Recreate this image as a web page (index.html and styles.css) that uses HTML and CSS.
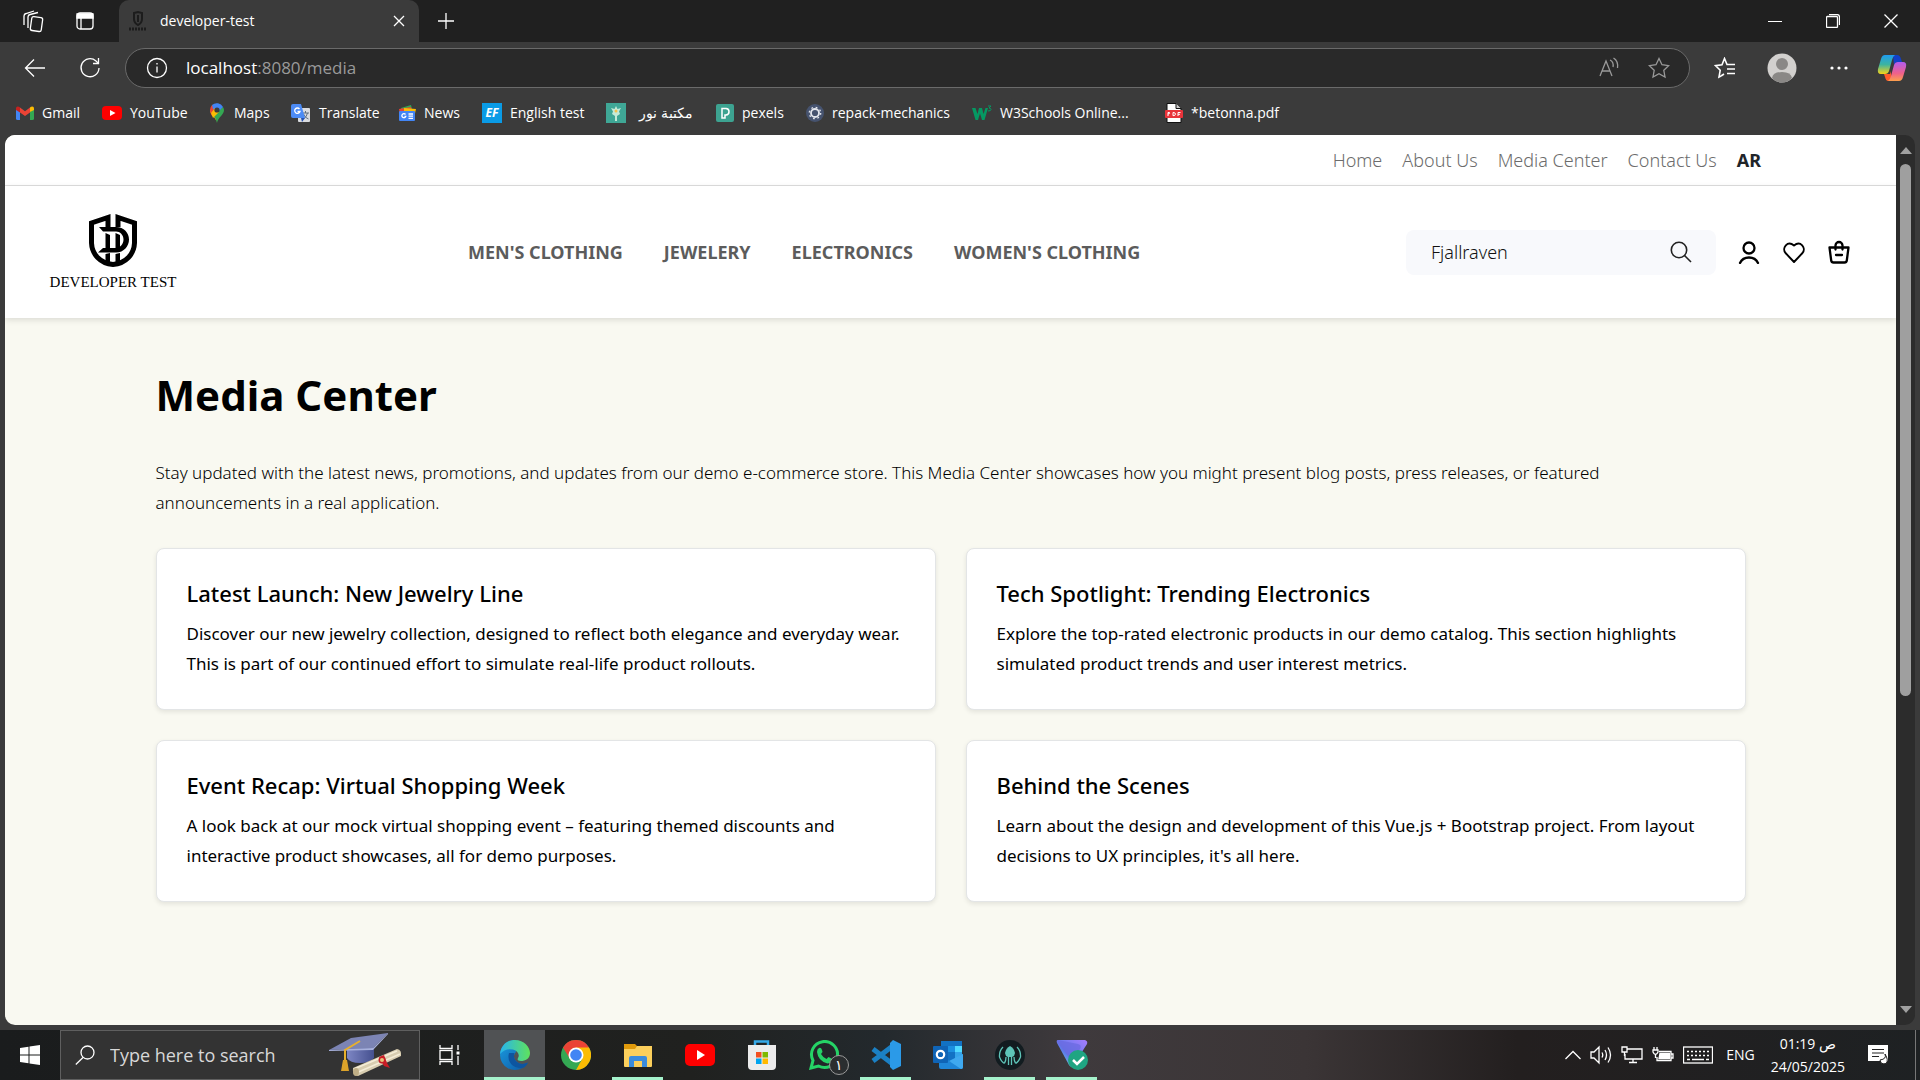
FILE: index.html
```html
<!DOCTYPE html>
<html lang="en">
<head>
<meta charset="utf-8">
<meta name="viewport" content="width=device-width, initial-scale=1">
<title>developer-test</title>
<link rel="stylesheet" href="styles.css">
</head>
<body>
<div class="browser">
  <div class="tabstrip">
    <button class="strip-btn" aria-label="Workspaces"><svg width="24" height="24" viewBox="0 0 24 24" class="line"><rect x="10" y="8" width="11" height="14" rx="2" transform="rotate(8 15 15)"/><path d="M7 19V8q0-2 2-2.500l8-2"/><path d="M3 16V7q0-2 2-2.500l8-2.500"/></svg></button>
    <button class="strip-btn" aria-label="Tab actions"><svg width="20" height="20" viewBox="0 0 20 20" class="line"><rect x="2" y="2" width="16" height="16" rx="3"/><path d="M2 3h16v4H2z" fill="#fff"/><path d="M6 7v11"/></svg></button>
    <div class="tab">
      <svg width="20" height="22" viewBox="0 0 20 22" fill="none" stroke="#1c1c1c" stroke-width="2"><path d="M6 3l4-1 4 1v6q0 4-4 6-4-2-4-6z"/><path d="M10 5v7"/><path d="M1 19h18" stroke-width="3" stroke-dasharray="2 1"/></svg>
      <span class="tab-title">developer-test</span>
      <button class="tab-close" aria-label="Close tab"><svg width="12" height="12" viewBox="0 0 12 12" class="line"><path d="M1 1l10 10M11 1L1 11"/></svg></button>
    </div>
    <button class="new-tab" aria-label="New tab"><svg width="18" height="18" viewBox="0 0 18 18" class="line"><path d="M9 1v16M1 9h16"/></svg></button>
    <div class="window-controls">
      <button aria-label="Minimize"><svg width="14" height="14" viewBox="0 0 14 14" class="line"><path d="M0 7.500h14" stroke-width="1"/></svg></button>
      <button aria-label="Restore"><svg width="14" height="14" viewBox="0 0 14 14" class="line"><rect x=".5" y="2.500" width="11" height="11" rx="1"/><path d="M3 .6h8q2.500 0 2.500 2.500v8"/></svg></button>
      <button aria-label="Close"><svg width="14" height="14" viewBox="0 0 14 14" class="line"><path d="M.5.5l13 13M13.500.5l-13 13"/></svg></button>
    </div>
  </div>

  <div class="toolbar">
    <button class="tool-btn back" aria-label="Back"><svg width="22" height="20" viewBox="0 0 22 20" class="line"><path d="M21 10H1.500M10 1.500L1.500 10l8.500 8.500"/></svg></button>
    <button class="tool-btn" aria-label="Refresh"><svg width="22" height="22" viewBox="0 0 22 22" class="line"><path d="M20 11a9 9 0 1 1-3-7l2 2"/><path d="M19.500 1v5.500H14"/></svg></button>
    <div class="address">
      <svg width="22" height="22" viewBox="0 0 22 22" class="line"><circle cx="11" cy="11" r="9.500"/><path d="M11 9.500v6M11 6v1.600"/></svg>
      <span class="url"><b>localhost</b>:8080/media</span>
      <svg width="22" height="22" viewBox="0 0 22 22" class="line dim"><path d="M2 19L8 4l6 15M4 14h8"/><path d="M12 3q4 2 3 7M15.500 1q5 3 4 10"/></svg>
      <svg width="22" height="22" viewBox="0 0 22 22" class="line dim"><path d="M11 1.500l3 6.200 6.600.9-4.800 4.700 1.200 6.700-6-3.200-6 3.200 1.200-6.700L1.400 8.600 8 7.700z"/></svg>
    </div>
    <button class="tool-btn fav" aria-label="Favorites"><svg width="22" height="22" viewBox="0 0 22 22" class="line bold"><path d="M7 19l-2 1 1.200-6.700L1.400 8.600 8 7.700 10.500 1.500 13 7.500h8M13 12h8M13 16.500h8"/><path d="M7 19l3-2"/></svg></button>
    <button class="tool-btn profile" aria-label="Profile"><svg width="30" height="30" viewBox="0 0 30 30"><circle cx="15" cy="15" r="14.500" fill="#d2d0ce"/><circle cx="15" cy="11" r="6" fill="#8a8886"/><path d="M5 25q1-6 10-6t10 6q-4 4.500-10 4.500T5 25z" fill="#8a8886"/></svg></button>
    <button class="tool-btn more" aria-label="Settings and more"><svg width="18" height="4" viewBox="0 0 18 4" fill="#fff"><circle cx="2" cy="2" r="1.600"/><circle cx="9" cy="2" r="1.600"/><circle cx="16" cy="2" r="1.600"/></svg></button>
    <button class="tool-btn copilot" aria-label="Copilot"><svg width="30" height="28" viewBox="0 0 30 28"><defs><linearGradient id="cpA" x2="0" y2="1"><stop offset="0" stop-color="#1f9cf0"/><stop offset=".5" stop-color="#3cb4a0"/><stop offset="1" stop-color="#f6d318"/></linearGradient><linearGradient id="cpB" x2="0" y2="1"><stop offset="0" stop-color="#b15cf0"/><stop offset=".6" stop-color="#f0618a"/><stop offset="1" stop-color="#fda04c"/></linearGradient></defs><path d="M16 1h4q3 0 4 4l1 3h-4q-3 0-4 3z" fill="#1240c8"/><path d="M7 20h6l1-3v10h-3q-2 0-3-4z" fill="#ff5a2a"/><path d="M8 1h10q-2 1-3 5l-3 11q-1 3-4 3H4q-4 0-3-5L4 5q1-4 4-4z" fill="url(#cpA)"/><path d="M22 27H11q2-1 3-5l3-11q1-3 4-3h5q4 0 3 5l-3 10q-1 4-4 4z" fill="url(#cpB)"/></svg></button>
  </div>

  <nav class="bookmarks" aria-label="Bookmarks">
    <a href="#"><svg width="18" height="18" viewBox="0 0 18 18"><path d="M0 4v10.500q0 1.500 1.500 1.500H4V8z" fill="#4285f4"/><path d="M18 4v10.500q0 1.500-1.500 1.500H14V8z" fill="#34a853"/><path d="M14 8V3.500l1-.8q3-1 3 1.800V6z" fill="#fbbc04"/><path d="M4 3.500L9 7.200l5-3.700V8.500L9 12 4 8.500z" fill="#ea4335"/><path d="M4 8.500V3.500l-1-.8q-3-1-3 1.800V6z" fill="#c5221f"/></svg>Gmail</a>
    <a href="#"><svg width="20" height="18" viewBox="0 0 20 18"><rect y="2" width="20" height="14" rx="4" fill="#f00"/><path d="M8 6l5.500 3L8 12z" fill="#fff"/></svg>YouTube</a>
    <a href="#"><svg width="18" height="20" viewBox="0 0 18 20"><path d="M9 20C8 14 2 12 2 7l4 2z" fill="#fbbc04"/><path d="M9 20c1-6 7-8 7-13a7 7 0 0 0-1-3L5 12q3 3 4 8z" fill="#34a853"/><path d="M2 7a7 7 0 0 1 2-5l5 5-5 6Q2 10 2 7z" fill="#ea4335"/><path d="M4 2a7 7 0 0 1 11 2l-4 4-6-2z" fill="#4285f4"/><path d="M3 10l4-5 4 4-6 6z" fill="#fbbc04"/><circle cx="9" cy="7" r="2.600" fill="#3b3b3b"/></svg>Maps</a>
    <a href="#"><svg width="20" height="20" viewBox="0 0 20 20"><rect x="7" y="5" width="12" height="14" rx="1" fill="#dadce0"/><path d="M11 10h7M14.500 8v2M12 16q4-2 4.500-6M12.500 11q1.500 4 5 5" stroke="#5f6f80" fill="none"/><path d="M2 1h8l4 14H2q-2 0-2-2V3q0-2 2-2z" fill="#4c8bf5"/><path d="M10 15h4l-3 4z" fill="#2451b0"/><path d="M8.500 6a2.700 2.700 0 1 0 .5 2.500H6.500" stroke="#fff" stroke-width="1.300" fill="none"/></svg>Translate</a>
    <a href="#"><svg width="18" height="18" viewBox="0 0 18 18"><path d="M3 4l10-3 2 8H4z" fill="#34a853"/><path d="M1 5l12-2 1 8H2z" fill="#ea4335"/><path d="M6 4l12 1-2 9H6z" fill="#fbbc04"/><rect x="1" y="7" width="16" height="10" rx="1" fill="#4285f4"/><path d="M7.500 10.500a2 2 0 1 0 .3 1.800H6.500M10.500 10h4.500M10.500 12.200h4.500M10.500 14.400h4.500" stroke="#fff" stroke-width="1.300" fill="none"/></svg>News</a>
    <a href="#"><span class="ef">EF</span>English test</a>
    <a href="#" class="noor"><svg width="20" height="20" viewBox="0 0 20 20"><rect width="20" height="20" fill="#3fa796"/><path d="M10 3l1.500 3L15 5l-2 3.500 1 2.500-3 2v5H9v-5l-3-2 1-2.500L5 5l3.500 1z" fill="#c4ead8"/><circle cx="10" cy="8" r="1.500" fill="#f3c04c"/></svg><span dir="rtl" lang="ar">مكتبة نور</span></a>
    <a href="#"><svg width="18" height="18" viewBox="0 0 18 18"><rect width="18" height="18" rx="2" fill="#3da391"/><path d="M6 4.500h4q3 .2 3 3.200T10 11H9v3H6z" fill="none" stroke="#fff" stroke-width="1.500"/></svg>pexels</a>
    <a href="#"><svg width="18" height="20" viewBox="0 0 18 20"><circle cx="9" cy="10" r="9" fill="#46536f"/><circle cx="9" cy="10" r="4" fill="none" stroke="#e2e5ec" stroke-width="1.800"/><circle cx="9" cy="10" r="5.700" fill="none" stroke="#e2e5ec" stroke-width="1.300" stroke-dasharray="1.800 2.676"/></svg>repack-mechanics</a>
    <a href="#"><svg width="20" height="18" viewBox="0 0 20 18"><path d="M0 4h3.500l2 6 1.500-6h3l1.500 6 2-6H16l-3.500 12H10L8 9.500 6 16H3.500z" fill="#059862"/><path d="M16 2h3l-2 2q2 0 2 1.500T16 7" fill="none" stroke="#059862"/></svg>W3Schools Online...</a>
    <a href="#"><svg width="18" height="20" viewBox="0 0 18 20"><path d="M2 .5h9l5 5v14H2z" fill="#fff" stroke="#111"/><path d="M11 .5v5h5" fill="#ccc" stroke="#111"/><rect y="7" width="18" height="8" rx="1" fill="#e8333a"/><path d="M3 13V9.500h1.500q1 1-1.500 1.500M8 9.500v3.200q2.500 0 2.500-1.600T8 9.500M13 13V9.500h2.500M13 11.300h2" fill="none" stroke="#fff"/></svg>*betonna.pdf</a>
  </nav>

  <div class="frame">
    <div class="page">
      <nav class="topbar" aria-label="Secondary">
        <a href="#">Home</a><a href="#">About Us</a><a href="#">Media Center</a><a href="#">Contact Us</a><a href="#" class="lang">AR</a>
      </nav>
      <header class="header">
        <a href="#" class="logo">
          <svg width="50" height="55" viewBox="0 0 50 55"><g fill="none" stroke="#000" stroke-width="5"><path d="M20 14V4.500L3.500 10v20C4 41 12 50.500 25 51.500 38 50.500 46 41 46.500 30V10L30 4.500V14"/></g><path d="M11 14h17c8 0 13 6 13 12.500S36 39.500 28 39.500H10l5-4.500h13c4 0 7.500-4 7.500-8.500S32 18.500 28 18.500H15z"/><path d="M17.500 20l4.500 2v15h-4.500zM27.500 20l4.500 2v15h-4.500zM17.500 41l4.500-1v9h-4.500zM27.500 41l4.500-1v9h-4.500z"/></svg>
          <span>DEVELOPER TEST</span>
        </a>
        <nav class="categories" aria-label="Categories">
          <a href="#">MEN'S CLOTHING</a><a href="#">JEWELERY</a><a href="#">ELECTRONICS</a><a href="#">WOMEN'S CLOTHING</a>
        </nav>
        <div class="actions">
          <form class="search">
            <input type="text" value="Fjallraven" aria-label="Search products">
            <button type="button" aria-label="Search"><svg width="22" height="22" viewBox="0 0 22 22" fill="none" stroke="#222" stroke-width="1.600"><circle cx="9" cy="9" r="7.700"/><path d="M14.500 14.500L21 21"/></svg></button>
          </form>
          <a href="#" aria-label="Account"><svg width="24" height="24" viewBox="0 0 24 24" class="ink"><circle cx="12" cy="8" r="5.500"/><path d="M3 23q2.500-5.500 9-5.500t9 5.500"/></svg></a>
          <a href="#" aria-label="Wishlist"><svg width="24" height="24" viewBox="0 0 24 24" class="ink"><path d="M12 22L3.500 13C-.5 8 5.500 0 12 5.500c6.500-5.500 12.500 2.500 8.500 7.500z" stroke-width="1.900"/></svg></a>
          <a href="#" aria-label="Cart"><svg width="24" height="24" viewBox="0 0 24 24" class="ink"><path d="M2.500 7.500h19l-1.700 13q-.3 2-2.300 2h-11q-2 0-2.300-2z"/><path d="M8.500 9.500V5.500a3.500 3.500 0 0 1 7 0v4M9 15h6"/></svg></a>
        </div>
      </header>
      <main class="content">
        <h1>Media Center</h1>
        <p class="intro">Stay updated with the latest news, promotions, and updates from our demo e-commerce store. This Media Center showcases how you might present blog posts, press releases, or featured announcements in a real application.</p>
        <div class="cards">
          <article class="card"><h2>Latest Launch: New Jewelry Line</h2><p>Discover our new jewelry collection, designed to reflect both elegance and everyday wear. This is part of our continued effort to simulate real-life product rollouts.</p></article>
          <article class="card"><h2>Tech Spotlight: Trending Electronics</h2><p>Explore the top-rated electronic products in our demo catalog. This section highlights simulated product trends and user interest metrics.</p></article>
          <article class="card"><h2>Event Recap: Virtual Shopping Week</h2><p>A look back at our mock virtual shopping event – featuring themed discounts and interactive product showcases, all for demo purposes.</p></article>
          <article class="card"><h2>Behind the Scenes</h2><p>Learn about the design and development of this Vue.js + Bootstrap project. From layout decisions to UX principles, it's all here.</p></article>
        </div>
      </main>
    </div>
    <div class="scrollbar">
      <svg width="12" height="8" viewBox="0 0 12 8" fill="#a0a0a0"><path d="M6 0l6 7H0z"/></svg>
      <div class="track"><div class="thumb"></div></div>
      <svg width="12" height="8" viewBox="0 0 12 8" fill="#a0a0a0"><path d="M6 8l6-7H0z"/></svg>
    </div>
  </div>
</div>

<footer class="taskbar">
  <button class="start" aria-label="Start"><svg width="20" height="20" viewBox="0 0 20 20" fill="#fff"><path d="M0 3l8.500-1.200v7.700H0zM9.500 1.600L20 0v9.500H9.500zM0 10.500h8.500v7.700L0 17zM9.500 10.500H20V20L9.500 18.400z"/></svg></button>
  <label class="task-search">
    <svg width="20" height="20" viewBox="0 0 20 20" class="line"><circle cx="12.500" cy="7.500" r="6.500"/><path d="M8 12.500L.8 19.500"/></svg>
    <input type="text" placeholder="Type here to search">
    <svg width="74" height="46" viewBox="0 0 74 46"><defs><linearGradient id="cap"><stop offset="0" stop-color="#7d86c4"/><stop offset="1" stop-color="#45508f"/></linearGradient></defs><path d="M18 17l27-3v12q-4 5-14 5t-13-5z" fill="url(#cap)"/><path d="M0 18L22 6 59 1 44 16z" fill="#7c84b4"/><path d="M0 18l44-2L59 1v1L44 18 0 19z" fill="#a8b1dc"/><path d="M31 9L16 18v15" fill="none" stroke="#e8b02c" stroke-width="2"/><path d="M14 28h4l2 11h-8z" fill="#dca32a"/><path d="M24 36L68 17q5 1 4 7L29 44q-6-1-5-8z" fill="#d8cdb0"/><path d="M25 37l43-18M27 41l44-19" stroke="#f4ecd6" stroke-width="1.500"/><path d="M50 25l5 9 6 2-3-5-3-8z" fill="#c81e26"/><circle cx="53" cy="28" r="3.500" fill="#c81e26"/><circle cx="53" cy="28" r="2" fill="#e6c27a"/><ellipse cx="27" cy="40" rx="3" ry="4" fill="#bfae86"/></svg>
  </label>
  <button class="task view" aria-label="Task view"><svg width="22" height="22" viewBox="0 0 22 22" class="line"><path d="M1 1v3.500h12V1M1 21v-3.500h12V21M19 1v5M19 12v9"/><rect x="1" y="6.500" width="12" height="9"/><path d="M19 7.500v3" stroke-width="3"/></svg></button>
  <button class="task active" aria-label="Edge"><svg width="30" height="30" viewBox="0 0 30 30"><defs><linearGradient id="edA" x2="1"><stop offset="0" stop-color="#27b4ee"/><stop offset="1" stop-color="#5fe25c"/></linearGradient><linearGradient id="edB" x2="1" y2="1"><stop offset="0" stop-color="#1b9de2"/><stop offset="1" stop-color="#0c59a4"/></linearGradient></defs><path d="M15 0a15 15 0 1 0 13 22.500q-5 2.500-9.500.5C13 20 13 15 16 12z" fill="url(#edB)"/><path d="M9 13q-2 7 3 12 6 5 12 2.500 3-2 4-5-5 2.500-9.500.5-6-3.500-4-10z" fill="#0d55a0"/><path d="M0 14C1 5 7 0 15 0c9 0 15 7 15 13 0 6-5 8-9 8-3 0-4-1-3-3 2-3 0-7-5-8.500Q5 8 0 14z" fill="url(#edA)"/></svg></button>
  <button class="task" aria-label="Chrome"><svg width="30" height="30" viewBox="0 0 30 30"><circle cx="15" cy="15" r="15" fill="#34a853"/><path d="M15 15L2 7.500A15 15 0 0 1 28 7.500z" fill="#ea4335"/><path d="M15 15V7.500h13A15 15 0 0 1 15 30l6.500-11.500z" fill="#fbbc04"/><path d="M2 7.500L9 19l6-11.500z" fill="#ea4335"/><circle cx="15" cy="15" r="7.500" fill="#fff"/><circle cx="15" cy="15" r="5.800" fill="#4285f4"/></svg></button>
  <button class="task open" aria-label="File Explorer"><svg width="28" height="28" viewBox="0 0 28 28"><path d="M0 3h11l3 3-3 3H0z" fill="#e09a0b"/><path d="M0 8h11l2-3h15v20q0 1-1 1H1q-1 0-1-1z" fill="#fbcf5c"/><path d="M5 26V17q0-2 2-2h14q2 0 2 2v9h-5v-6h-8v6z" fill="#3a8bdc"/></svg></button>
  <button class="task" aria-label="YouTube"><svg width="30" height="22" viewBox="0 0 30 22"><rect width="30" height="22" rx="5" fill="#f00"/><path d="M12 6l8 5-8 5z" fill="#fff"/></svg></button>
  <button class="task" aria-label="Store"><svg width="30" height="30" viewBox="0 0 30 30"><path d="M8 8V1.500h13V8" fill="none" stroke="#35a9e8" stroke-width="2.500"/><path d="M1 5h28v21q0 4-4 4H5q-4 0-4-4z" fill="#ececec"/><path d="M9 12h5.500v5.500H9z" fill="#f25022"/><path d="M15.500 12H21v5.500h-5.500z" fill="#7fba00"/><path d="M9 18.500h5.500V24H9z" fill="#00a4ef"/><path d="M15.500 18.500H21V24h-5.500z" fill="#ffb900"/></svg></button>
  <button class="task" aria-label="WhatsApp"><svg width="30" height="30" viewBox="0 0 30 30"><path d="M2 28l2-7.500A13 13 0 1 1 9.500 26z" fill="none" stroke="#25d366" stroke-width="3"/><path d="M10 8q2-1 3 2l.5 2-1.500 2q2 3.500 5.500 5l2-2 4 2q0 4-5 4.500Q9 21 8 12q0-3 2-4z" fill="#25d366"/></svg><span class="badge">١</span></button>
  <button class="task open" aria-label="VS Code"><svg width="30" height="30" viewBox="0 0 30 30"><path d="M2 9L23 25M2 21L23 5" stroke="#1b80c4" stroke-width="5"/><path d="M22 0l8 4v22l-8 4-3-3V3z" fill="#2b9ae8"/></svg></button>
  <button class="task" aria-label="Outlook"><svg width="30" height="30" viewBox="0 0 30 30"><rect x="8" y="1" width="21" height="20" fill="#1272c4"/><path d="M15 6h7v6h-7z" fill="#1b8fe0"/><path d="M22 6h7v6h-7z" fill="#50d9ff"/><path d="M22 12h7v6h-7z" fill="#35a5ea"/><path d="M6 14l12 8 12-8v13q0 2-2 2H8q-2 0-2-2z" fill="#1f86d8"/><path d="M30 14v13q0 2-2 2L16 21z" fill="#3fa9f0"/><rect y="6" width="15" height="17" rx="1" fill="#0f64b6"/><circle cx="7.500" cy="14.500" r="3.700" fill="none" stroke="#fff" stroke-width="2.200"/></svg></button>
  <button class="task open" aria-label="GitKraken"><svg width="30" height="30" viewBox="0 0 30 30"><circle cx="15" cy="15" r="15" fill="#121c20"/><path d="M15 6q4 2 5 7l-1 3-2 1h-4l-2-1-1-3q1-5 5-7z" fill="#5ec4b8"/><path d="M8 7q-4 4-3.500 10 2 5 5 6.500M22 7q4 4 3.500 10-2 5-5 6.500M13.500 16v9M16.500 16v9M11 17q0 4-1.500 6M19 17q0 4 1.500 6" fill="none" stroke="#5ec4b8" stroke-width="1.300"/></svg></button>
  <button class="task open" aria-label="Proton VPN"><svg width="34" height="32" viewBox="0 0 34 32"><defs><linearGradient id="vpn" x1="1" x2="0" y2="1"><stop offset="0" stop-color="#a67cff"/><stop offset=".6" stop-color="#5e7ce8"/><stop offset="1" stop-color="#7be8d6"/></linearGradient></defs><path d="M3 1h27q3 1 2 4L18 27q-2 2-4-1L2 4Q1 1 3 1z" fill="url(#vpn)"/><path d="M3 1l20 4q4 1 2 5l-8 12L2 3z" fill="#6a68e0" opacity=".7"/><circle cx="23" cy="21" r="10" fill="#1fa582"/><path d="M18 21l4 4 7-7" fill="none" stroke="#fff" stroke-width="2.500"/></svg></button>
  <div class="tray">
    <svg width="16" height="10" viewBox="0 0 16 10" class="line"><path d="M.5 9L8 1.500 15.500 9"/></svg>
    <svg width="22" height="20" viewBox="0 0 22 20" class="line"><path d="M1 7h3l5-5v16l-5-5H1zM12 7.500q1.500 2.500 0 5M15 5q3 5 0 10M18 2.500q5 7.500 0 15"/></svg>
    <svg width="22" height="18" viewBox="0 0 22 18" class="line"><path d="M6 3h15v10H4V8M12 13v3.500M8 16.500h8M1 1h5v5H1zM3.500 6v4"/></svg>
    <svg width="22" height="16" viewBox="0 0 22 16" class="line"><path d="M7 4.500h12v9H5V10M19.500 7H21v4h-1.500M2 0v3M5 0v3M1 3h5v2q-1 2.500-2.500 2.500T1 5zM3.500 8v3"/><path d="M8 6.500h9.500v5H7z" fill="#fff"/></svg>
    <svg width="30" height="18" viewBox="0 0 30 18" class="line"><rect x=".5" y="1" width="29" height="16"/><path d="M4 5.500h22M4 9.500h22" stroke-dasharray="2 2"/><path d="M4 13.500h3M9 13.500h12M23 13.500h3"/></svg>
    <span class="ime">ENG</span>
    <span class="clock"><span dir="rtl">ص 01:19</span><span>24/05/2025</span></span>
    <svg width="22" height="22" viewBox="0 0 22 22"><path d="M0 1h20v16H6l-4 0H0z" fill="#fff"/><path d="M4 5.500h12M4 9h12M4 12.500h7" stroke="#222"/><path d="M17 10q2 5-5 6 1 5 6 3.500 3-3-1-9.500z" fill="#fff" stroke="#222"/></svg>
    <span class="peek"></span>
  </div>
</footer>
</body>
</html>
```
FILE: styles.css
```css
* { box-sizing: border-box; }
body {
  margin: 0;
  min-height: 100vh;
  display: flex;
  flex-direction: column;
  background: #3b3b3b;
  color: #fff;
  font: 14px/20px "Open Sans", "Noto Sans", sans-serif;
}
button {
  border: 0;
  padding: 0;
  background: none;
  color: inherit;
  display: flex;
  align-items: center;
  justify-content: center;
}
a { color: inherit; text-decoration: none; }
svg { flex: none; display: block; }
.line { fill: none; stroke: #fff; stroke-width: 1.3; }
.line.bold { stroke-width: 1.6; }
.line.dim { stroke: #9a9a9a; }

/* Browser chrome */
.browser { flex: 1; display: flex; flex-direction: column; }
.tabstrip { display: flex; align-items: center; height: 42px; padding-left: 7px; background: #202020; }
.strip-btn { width: 52px; height: 42px; }
.tab {
  width: 300px;
  height: 42px;
  margin-left: 8px;
  padding: 0 12px 0 9px;
  display: flex;
  align-items: center;
  gap: 12px;
  background: #3b3b3b;
  border-radius: 10px 10px 0 0;
}
.tab-title { flex: 1; }
.tab-close { width: 16px; height: 24px; }
.new-tab { width: 54px; height: 42px; }
.window-controls { display: flex; margin-left: auto; }
.window-controls button { width: 58px; height: 42px; }

.toolbar { display: flex; align-items: center; height: 52px; padding: 0 11px 0 7px; }
.tool-btn { width: 55px; height: 40px; }
.address {
  flex: 1;
  height: 40px;
  margin-left: 8px;
  padding: 0 19px 0 20px;
  display: flex;
  align-items: center;
  gap: 28px;
  background: #292929;
  border: 1px solid #6a6a6a;
  border-radius: 20px;
}
.url { flex: 1; margin-left: -10px; font-size: 17px; line-height: 24px; color: #9a9a9a; }
.url b { font-weight: 400; color: #fff; }
.fav { width: 70px; }
.profile { width: 44px; }
.more { width: 70px; }
.copilot { width: 35px; }

.bookmarks {
  display: grid;
  grid-template-columns: 86px 106px 83px 107px 84px 124px 110px 90px 166px 193px auto;
  align-items: center;
  height: 36px;
  padding: 1px 0 0 16px;
}
.bookmarks a { display: flex; align-items: center; gap: 8px; white-space: nowrap; }
.bookmarks .noor { gap: 13px; }
.ef { width: 20px; background: #0a9be6; font: italic 700 12px/20px "Open Sans", sans-serif; text-align: center; }

.frame {
  flex: 1;
  display: flex;
  margin: 5px;
  border-radius: 10px;
  overflow: hidden;
}
.scrollbar {
  width: 19px;
  padding: 12px 0;
  display: flex;
  flex-direction: column;
  align-items: center;
  gap: 9px;
  background: #2c2c2c;
}
.track { flex: 1; }
.thumb { width: 11px; height: 64%; min-height: 40px; background: #9f9f9f; border-radius: 6px; }

/* Web page */
.page {
  flex: 1;
  background: #f9f9f1;
  color: #000;
  font: 17px/30px "Noto Sans", sans-serif;
}
.topbar {
  display: flex;
  align-items: center;
  justify-content: flex-end;
  gap: 20px;
  height: 51px;
  padding-right: 135px;
  background: #fff;
  border-bottom: 1px solid #dedede;
  color: #6c6c6c;
  font-size: 18px;
  font-weight: 300;
}
.lang { color: #212529; font-weight: 700; }
.header {
  display: flex;
  align-items: center;
  height: 132px;
  padding: 0 45px;
  background: #fff;
  box-shadow: 0 2px 6px rgba(0, 0, 0, .12);
}
.logo { display: flex; flex-direction: column; align-items: center; gap: 4px; width: 126px; font: 15px/20px "Liberation Serif", serif; white-space: nowrap; }
.categories { display: flex; gap: 41px; margin-left: 292px; font-size: 18px; font-weight: 700; color: #5c5c5c; }
.actions { display: flex; align-items: center; gap: 21px; margin-left: auto; }
.ink { fill: none; stroke: #000; stroke-width: 2.3; stroke-linecap: round; stroke-linejoin: round; }
.search { display: flex; align-items: center; width: 310px; height: 45px; padding: 0 24px 0 25px; background: #f8f9fc; border-radius: 8px; }
.search input { flex: 1; min-width: 0; border: 0; padding: 0; background: none; font: 300 18px/24px "Noto Sans", sans-serif; color: #111; }

.content { max-width: 1590px; margin: 0 auto; padding: 48px 0 30px; }
h1 { margin: 0 0 34px; font-size: 42px; line-height: 58px; font-weight: 700; }
.intro { max-width: 1540px; margin: 0 0 30px; font-weight: 350; }
.cards { display: grid; grid-template-columns: 1fr 1fr; gap: 30px; }
.card { padding: 30px; background: #fff; border: 1px solid #e3e5e6; border-radius: 8px; box-shadow: 0 2px 5px rgba(0, 0, 0, .09); }
.card h2 { margin: 0 0 12px; font-size: 22px; line-height: 28px; font-weight: 500; }
.card p { margin: 0; }

/* Taskbar */
.taskbar {
  display: flex;
  height: 50px;
  background: linear-gradient(90deg, #1a1c1d, #20211f 36%, #23292d 46%, #3f3a3d 56%, #3b3536 68%, #231f1f 79%, #1e2123);
}
.start { width: 60px; }
.task-search { display: flex; align-items: center; width: 360px; padding: 0 16px 0 14px; background: #333; border: 1px solid #5f5f5f; }
.task-search input { flex: 1; min-width: 0; margin-left: 15px; padding: 0; border: 0; background: none; font: 18px/24px "Open Sans", sans-serif; }
.task-search input::placeholder { color: #d8d8d8; opacity: 1; }
.task { position: relative; width: 51px; margin: 0 6px 0 5px; }
.task.view { width: 60px; margin: 0 4px 0 0; }
.task.active { width: 61px; margin: 0; background: #505254; border-bottom: 3px solid #a5f2cc; padding-top: 3px; }
.task.open { border-bottom: 3px solid #a5f2cc; padding-top: 3px; }
.badge {
  position: absolute;
  right: 0;
  bottom: 5px;
  width: 20px;
  height: 20px;
  background: #2b2e30;
  border: 1px solid #999;
  border-radius: 50%;
  font-size: 14px;
  line-height: 18px;
}
.tray { display: flex; align-items: center; gap: 9px; margin-left: auto; padding-right: 4px; }
.ime { margin-left: 4px; }
.clock { display: flex; flex-direction: column; align-items: center; line-height: 23px; margin: 0 14px 0 7px; }
.peek { width: 1px; height: 50px; margin-left: 16px; background: #777; }
```
